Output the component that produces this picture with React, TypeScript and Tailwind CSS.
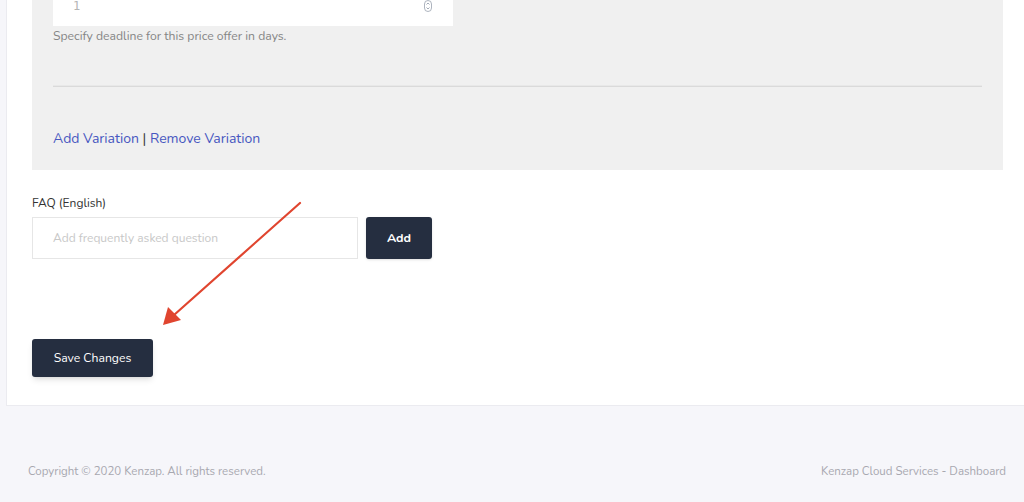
import React from "react";

const font = { fontFamily: "Nunito, Lato, 'Open Sans', sans-serif" };

function Spinner() {
  return (
    <svg width="8" height="12" viewBox="0 0 8 12" className="text-gray-400">
      <rect x="0.5" y="0.5" width="7" height="11" rx="3.5" fill="none" stroke="currentColor" strokeWidth="0.8" />
      <path d="M2.5 4.5 L4 3 L5.5 4.5" fill="none" stroke="currentColor" strokeWidth="0.9" />
      <path d="M2.5 7.5 L4 9 L5.5 7.5" fill="none" stroke="currentColor" strokeWidth="0.9" />
    </svg>
  );
}

export default function App() {
  return (
    <div className="relative min-h-[502px] bg-[#f6f6fa] overflow-hidden" style={font}>
      {/* main card */}
      <div className="ml-[6px] bg-white border-l border-b border-[#ebebf0] pl-[25px] pr-[21px] pb-[28px]">
        <div className="bg-[#f0f0f0] px-[21px] pb-[21px]">
          <div className="-mt-[14px] w-[400px] h-[40px] bg-white flex items-center justify-between pl-[20px] pr-[21px]">
            <span className="text-[12px] text-[#b5b5b5]" style={{ fontFamily: "'DejaVu Sans Mono', monospace" }}>1</span>
            <Spinner />
          </div>
          <p className="mt-[1px] text-[12.2px] text-[#858585] leading-[18px]">
            Specify deadline for this price offer in days.
          </p>
          <div className="mt-[40px] h-[2px] bg-[#dadada] border-t border-[#e8e8e8]" />
          <div className="mt-[42px] text-[14px] leading-[20px] text-[#3d3d3d]">
            <a className="text-[#4757c0]">Add Variation</a> | <a className="text-[#4757c0]">Remove Variation</a>
          </div>
        </div>

        <div className="mt-[24px] text-[12px] leading-[18px] text-[#333]">FAQ (English)</div>
        <div className="mt-[5px] flex gap-[8px]">
          <div className="w-[326px] h-[42px] border border-[#e6e6e6] flex items-center pl-[20px] text-[12px] text-[#c8c8c8]">
            Add frequently asked question
          </div>
          <button className="w-[66px] h-[42px] bg-[#252e40] text-white text-[12.5px] font-bold rounded-[3px] shadow-sm">
            Add
          </button>
        </div>

        <button className="mt-[80px] w-[121px] h-[38px] bg-[#252e40] text-white text-[12.2px] rounded-[3px] shadow-md">
          Save Changes
        </button>
      </div>

      {/* footer */}
      <div className="flex justify-between pl-[28px] pr-[18px] pt-[57px] text-[11.5px] text-[#a8a8b0]">
        <span>Copyright © 2020 Kenzap. All rights reserved.</span>
        <span>Kenzap Cloud Services - Dashboard</span>
      </div>

      {/* annotation arrow */}
      <svg className="absolute left-0 top-0 pointer-events-none" width="1024" height="502">
        <line x1="300" y1="203" x2="174" y2="315" stroke="#e0452f" strokeWidth="2.2" strokeLinecap="round" />
        <polygon points="163,325 168,307 181,320" fill="#e0452f" />
      </svg>
    </div>
  );
}
